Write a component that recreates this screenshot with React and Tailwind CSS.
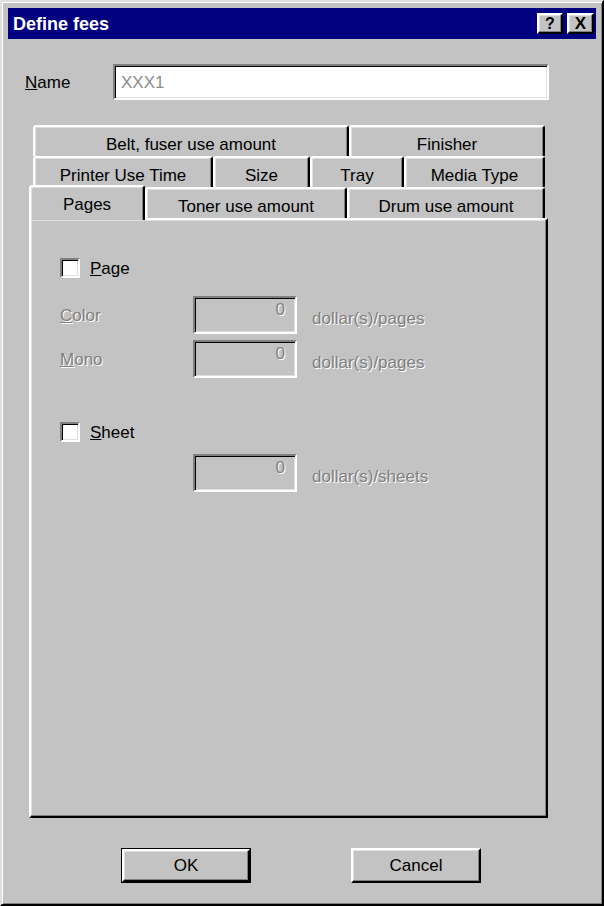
const raised =
  "border-t-2 border-l-2 border-t-white border-l-white border-r-2 border-b-2 border-r-black border-b-black shadow-[inset_-1px_-1px_#808080,inset_1px_1px_#dfdfdf]";
const sunken =
  "border-t-2 border-l-2 border-t-[#808080] border-l-[#808080] border-r-2 border-b-2 border-r-white border-b-white shadow-[inset_1px_1px_#000,inset_-1px_-1px_#dfdfdf]";
const dim = "text-[#808080] [text-shadow:1px_1px_0_#fff]";

function Tab({ w, children }) {
  return (
    <div
      className={`${w} h-[31px] flex items-center justify-center pt-[5px] rounded-t-[3px] border-t-2 border-l-2 border-t-white border-l-white border-r-2 border-r-black shadow-[inset_-1px_0_#808080,inset_1px_1px_#dfdfdf]`}
    >
      {children}
    </div>
  );
}

function FeeInput({ unit }) {
  return (
    <div className="flex items-center">
      <div className={`${sunken} w-[104px] h-[38px] flex items-start justify-end pr-[10px] pt-[3px] ${dim}`}>0</div>
      <span className={`ml-[15px] mt-[6px] ${dim}`}>{unit}</span>
    </div>
  );
}

function Check({ u, rest }) {
  return (
    <div className="flex items-center h-[20px]">
      <div className={`${sunken} w-[20px] h-[20px] bg-white`} />
      <span className="ml-[10px]">
        <span className="underline">{u}</span>
        {rest}
      </span>
    </div>
  );
}

export default function App() {
  return (
    <div className="w-[604px] h-[906px] bg-[#c3c3c3] border-2 border-t-[#dfdfdf] border-l-[#dfdfdf] border-r-black border-b-black font-['Liberation_Sans',Arial,sans-serif] text-[17px] leading-none text-black">
      <div className="h-full p-[6px] shadow-[inset_1px_1px_#fff,inset_-1px_-1px_#808080]">
        {/* title bar */}
        <div className="h-[31px] bg-[#000080] flex items-center justify-between pl-[5px] pr-[2px]">
          <span className="text-white font-bold text-[18px]">Define fees</span>
          <div className="flex gap-[4px]">
            <div className={`${raised} w-[26px] h-[21px] bg-[#c3c3c3] flex items-center justify-center font-bold text-[16px]`}>?</div>
            <div className={`${raised} w-[27px] h-[21px] bg-[#c3c3c3] flex items-center justify-center font-bold text-[17px]`}>X</div>
          </div>
        </div>

        {/* name */}
        <div className="flex items-center mt-[25px] pl-[17px]">
          <span className="w-[88px]">
            <span className="underline">N</span>ame
          </span>
          <div className={`${sunken} w-[436px] h-[36px] bg-white flex items-center pl-[6px] text-[#8c8c8c]`}>XXX1</div>
        </div>

        {/* tabs */}
        <div className="mt-[25px] ml-[21px] w-[519px]">
          <div className="flex ml-[4px]">
            <Tab w="w-[316px]">Belt, fuser use amount</Tab>
            <Tab w="w-[196px]">Finisher</Tab>
          </div>
          <div className="flex ml-[4px]">
            <Tab w="w-[180px]">Printer Use Time</Tab>
            <Tab w="w-[97px]">Size</Tab>
            <Tab w="w-[94px]">Tray</Tab>
            <Tab w="w-[141px]">Media Type</Tab>
          </div>
          <div className="flex items-end h-[31px] relative z-10">
            <div className="w-[116px] h-[35px] -mb-[2px] bg-[#c3c3c3] flex items-center justify-center pt-[2px] rounded-t-[3px] border-t-2 border-l-2 border-t-white border-l-white border-r-2 border-r-black shadow-[inset_-1px_0_#808080,inset_1px_1px_#dfdfdf]">
              Pages
            </div>
            <Tab w="w-[202px]">Toner use amount</Tab>
            <Tab w="w-[198px]">Drum use amount</Tab>
          </div>

          {/* panel */}
          <div className={`${raised} h-[600px] pl-[29px] pt-[38px]`}>
            <Check u="P" rest="age" />
            <div className="flex items-center mt-[18px]">
              <span className={`w-[133px] ${dim}`}>
                <span className="underline">C</span>olor
              </span>
              <FeeInput unit="dollar(s)/pages" />
            </div>
            <div className="flex items-center mt-[6px]">
              <span className={`w-[133px] ${dim}`}>
                <span className="underline">M</span>ono
              </span>
              <FeeInput unit="dollar(s)/pages" />
            </div>
            <div className="mt-[44px]">
              <Check u="S" rest="heet" />
            </div>
            <div className="mt-[12px] pl-[133px]">
              <FeeInput unit="dollar(s)/sheets" />
            </div>
          </div>
        </div>

        {/* buttons */}
        <div className="flex mt-[30px] pl-[113px]">
          <div className="w-[130px] h-[35px] border border-black">
            <div className={`${raised} h-full flex items-center justify-center`}>OK</div>
          </div>
          <div className={`${raised} ml-[100px] w-[130px] h-[35px] flex items-center justify-center`}>Cancel</div>
        </div>
      </div>
    </div>
  );
}
